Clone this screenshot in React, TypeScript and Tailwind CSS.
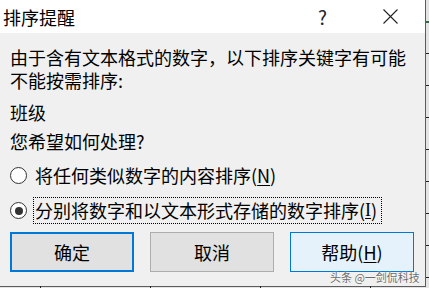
const font = { fontFamily: '"Noto Sans CJK SC", "Noto Sans", sans-serif' };

function Radio({ checked }: { checked?: boolean }) {
  return (
    <span className="flex h-[17px] w-[17px] shrink-0 items-center justify-center rounded-full border border-[#333] bg-white">
      {checked && <span className="h-[8px] w-[8px] rounded-full bg-[#333]" />}
    </span>
  );
}

export default function App() {
  return (
    <div
      className="relative h-[288px] w-[429px] overflow-hidden bg-[#e4e4e4] text-black"
      style={font}
    >
      <div className="flex h-[287px] w-[426px] flex-col border-b border-r border-[#5c5c5c] bg-[#f0f0f0]">
        {/* title bar */}
        <div className="flex h-[33px] shrink-0 items-center bg-white pl-[3px]">
          <span className="text-[18px] leading-none">排序提醒</span>
          <span className="ml-auto mr-[56px] text-[19px] leading-none text-[#222]">?</span>
          <svg className="mr-[27px]" width="15" height="15" viewBox="0 0 15 15">
            <path d="M0.5 0.5 L14.5 14.5 M14.5 0.5 L0.5 14.5" stroke="#222" strokeWidth="1.1" />
          </svg>
        </div>

        {/* body */}
        <div className="flex flex-col px-[10px] pt-[13px] text-[18px] leading-[23px]">
          <p>由于含有文本格式的数字，以下排序关键字有可能</p>
          <p>不能按需排序:</p>
          <p className="mt-[9px]">班级</p>
          <p className="mt-[6px]">您希望如何处理?</p>

          <div className="mt-[10px] flex h-[24px] items-center">
            <Radio />
            <span className="ml-[8px]">
              将任何类似数字的内容排序(<span className="underline underline-offset-2">N</span>)
            </span>
          </div>

          <div className="mt-[10px] flex h-[27px] items-center">
            <Radio checked />
            <span className="ml-[6px] flex h-[27px] w-[349px] items-center border border-dotted border-black pl-[1px]">
              分别将数字和以文本形式存储的数字排序(
              <span className="underline underline-offset-2" style={{ fontFamily: '"Liberation Serif", serif' }}>
                I
              </span>
              )
            </span>
          </div>

          <div className="mt-[8px] flex gap-[16px]">
            <button className="flex h-[40px] w-[124px] items-center justify-center border-2 border-[#0078d7] bg-[#e1e1e1] text-[18px]">
              确定
            </button>
            <button className="flex h-[40px] w-[124px] items-center justify-center border border-[#adadad] bg-[#e1e1e1] text-[18px]">
              取消
            </button>
            <button className="flex h-[40px] w-[124px] items-center justify-center border border-[#0078d7] bg-[#e5f1fb] text-[18px]">
              帮助(<span className="underline underline-offset-2">H</span>)
            </button>
          </div>
        </div>
      </div>

      {/* excel grid peeking out */}
      <div className="absolute right-0 top-[21px] h-[2px] w-[3px] bg-[#217346]" />
      <div className="absolute right-0 top-[53px] h-[1px] w-[3px] bg-[#222]" />
      <div className="absolute right-0 top-[85px] h-[1px] w-[3px] bg-[#222]" />
      <div className="absolute right-0 top-[117px] h-[1px] w-[3px] bg-[#222]" />
      <div className="absolute right-0 top-[149px] h-[1px] w-[3px] bg-[#222]" />
      <div className="absolute right-0 top-[181px] h-[1px] w-[3px] bg-[#222]" />
      <div className="absolute right-0 top-[213px] h-[1px] w-[3px] bg-[#222]" />
      <div className="absolute right-0 top-[245px] h-[1px] w-[3px] bg-[#222]" />
      <div className="absolute right-0 top-[277px] h-[1px] w-[3px] bg-[#222]" />
      <div className="absolute bottom-0 left-[40px] h-[2px] w-[1px] bg-[#222]" />
      <div className="absolute bottom-0 left-[150px] h-[2px] w-[1px] bg-[#222]" />
      <div className="absolute bottom-0 left-[260px] h-[2px] w-[1px] bg-[#222]" />
      <div className="absolute bottom-0 left-[370px] h-[2px] w-[1px] bg-[#222]" />

      {/* watermark */}
      <span
        className="absolute left-[330px] top-[271px] whitespace-nowrap text-[11px] leading-[13px] text-[#6a6a6a]"
        style={{ textShadow: "0 0 2px #fff, 0 0 1px #fff" }}
      >
        头条 @一剑侃科技
      </span>
    </div>
  );
}
